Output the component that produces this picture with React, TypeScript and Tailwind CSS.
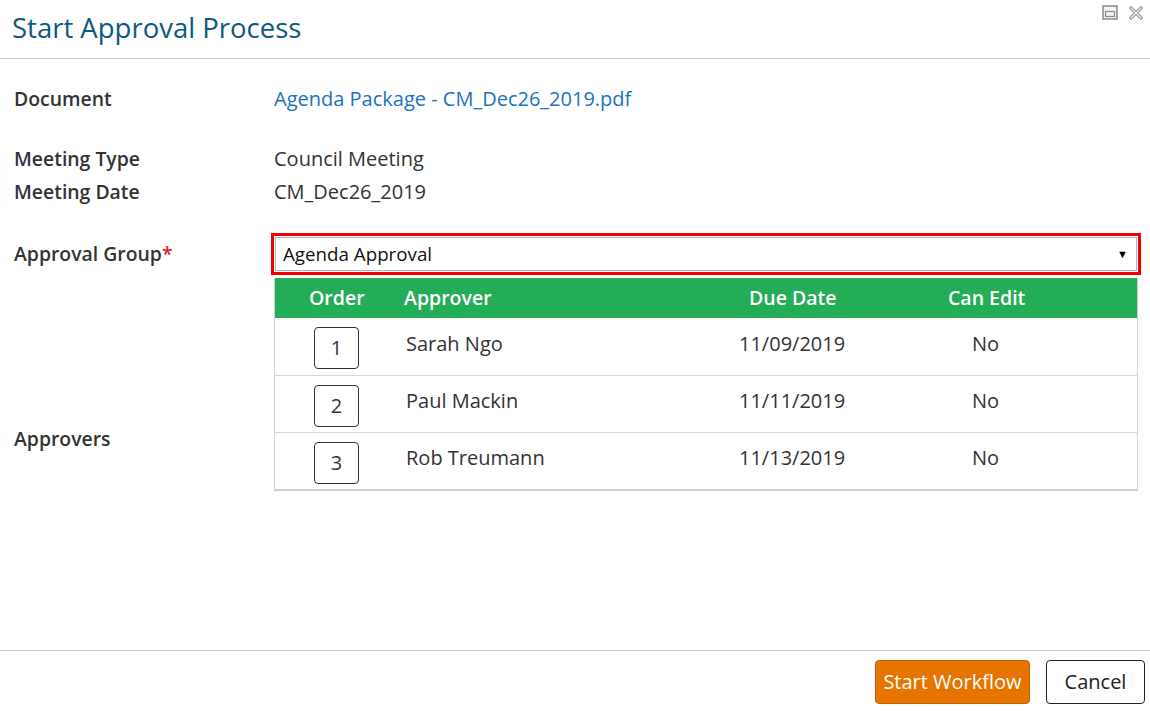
import React from "react";

const rows = [
  { n: 1, name: "Sarah Ngo", date: "11/09/2019", edit: "No" },
  { n: 2, name: "Paul Mackin", date: "11/11/2019", edit: "No" },
  { n: 3, name: "Rob Treumann", date: "11/13/2019", edit: "No" },
];

export default function App() {
  return (
    <div
      className="w-[1150px] h-[711px] bg-white flex flex-col text-[#333] overflow-hidden relative"
      style={{ fontFamily: '"Open Sans", "Liberation Sans", sans-serif' }}
    >
      <div className="absolute right-[7px] top-[5px] flex items-center gap-[11px]">
        <svg width="16" height="15" viewBox="0 0 16 15">
          <rect x="1" y="1" width="14" height="13" fill="#f3f3f3" stroke="#8a8a8a" strokeWidth="1.5" />
          <rect x="3.5" y="6.5" width="9" height="5" fill="none" stroke="#8a8a8a" strokeWidth="1.2" />
        </svg>
        <svg width="14" height="14" viewBox="0 0 14 14">
          <path d="M2 2 L12 12 M12 2 L2 12" stroke="#9a9a9a" strokeWidth="3.5" strokeLinecap="round" />
          <path d="M2 2 L12 12 M12 2 L2 12" stroke="#ececec" strokeWidth="1.2" strokeLinecap="round" />
        </svg>
      </div>
      <div className="h-[59px] border-b border-[#c8c8c8] flex items-center pl-[12px] shrink-0">
        <h1 className="text-[27.5px] text-[#0d5a80] leading-none -mt-[3px]">Start Approval Process</h1>
      </div>

      <div className="flex-1 flex flex-col pl-[14px] pt-[25px] text-[20px]">
        <div className="flex items-center h-[30px]">
          <div className="w-[260px] font-semibold text-[19.4px]">Document</div>
          <a className="text-[#1a73c0]">Agenda Package - CM_Dec26_2019.pdf</a>
        </div>
        <div className="flex items-center h-[30px] mt-[30px]">
          <div className="w-[260px] font-semibold text-[19.4px]">Meeting Type</div>
          <div>Council Meeting</div>
        </div>
        <div className="flex items-center h-[30px] mt-[3px]">
          <div className="w-[260px] font-semibold text-[19.4px]">Meeting Date</div>
          <div>CM_Dec26_2019</div>
        </div>

        <div className="flex mt-[26px]">
          <div className="w-[257px] font-semibold text-[19.4px] pt-[6px]">
            Approval Group<span className="text-[#e0201e]">*</span>
          </div>
          <div className="flex flex-col w-[870px]">
            <div className="border-[3px] border-[#f00000] p-[1px] h-[42px]">
              <div className="border border-[#b5b5b5] h-full flex items-center justify-between pl-[7px] pr-[8px]">
                <span className="text-[#111] text-[18.75px]">Agenda Approval</span>
                <span className="text-[11px] text-black">▼</span>
              </div>
            </div>
            <div className="mx-[3px] mt-[3px] border border-[#d4d4d4] border-t-0 border-b-2 border-b-[#cfcfcf]">
              <div className="h-[40px] bg-[#24ad57] text-white font-semibold text-[19.5px] flex items-center">
                <div className="w-[129px] pl-[34px]">Order</div>
                <div className="w-[345px]">Approver</div>
                <div className="w-[199px]">Due Date</div>
                <div>Can Edit</div>
              </div>
              {rows.map((r, i) => (
                <div
                  key={r.n}
                  className={`h-[57px] flex items-center ${i > 0 ? "border-t border-[#d8d8d8]" : ""}`}
                >
                  <div className="w-[131px] pl-[39px] pt-[3px]">
                    <div className="w-[45px] h-[42px] border border-[#333] rounded-[4px] flex items-center justify-center">
                      {r.n}
                    </div>
                  </div>
                  <div className="w-[333px] -mt-[6px]">{r.name}</div>
                  <div className="w-[233px] -mt-[6px]">{r.date}</div>
                  <div className="-mt-[6px]">{r.edit}</div>
                </div>
              ))}
            </div>
          </div>
        </div>
        <div className="font-semibold text-[19.4px] -mt-[67px]">Approvers</div>
      </div>

      <div className="h-[61px] border-t border-[#c8c8c8] flex items-center justify-end pr-[5px] gap-[16px] shrink-0 pt-[2px]">
        <button className="h-[44px] w-[155px] rounded-[4px] bg-[#e87400] border border-[#c06000] text-white text-[20px]">
          Start Workflow
        </button>
        <button className="h-[44px] w-[99px] rounded-[4px] bg-white border border-[#222] text-[#222] text-[20px]">
          Cancel
        </button>
      </div>
    </div>
  );
}
